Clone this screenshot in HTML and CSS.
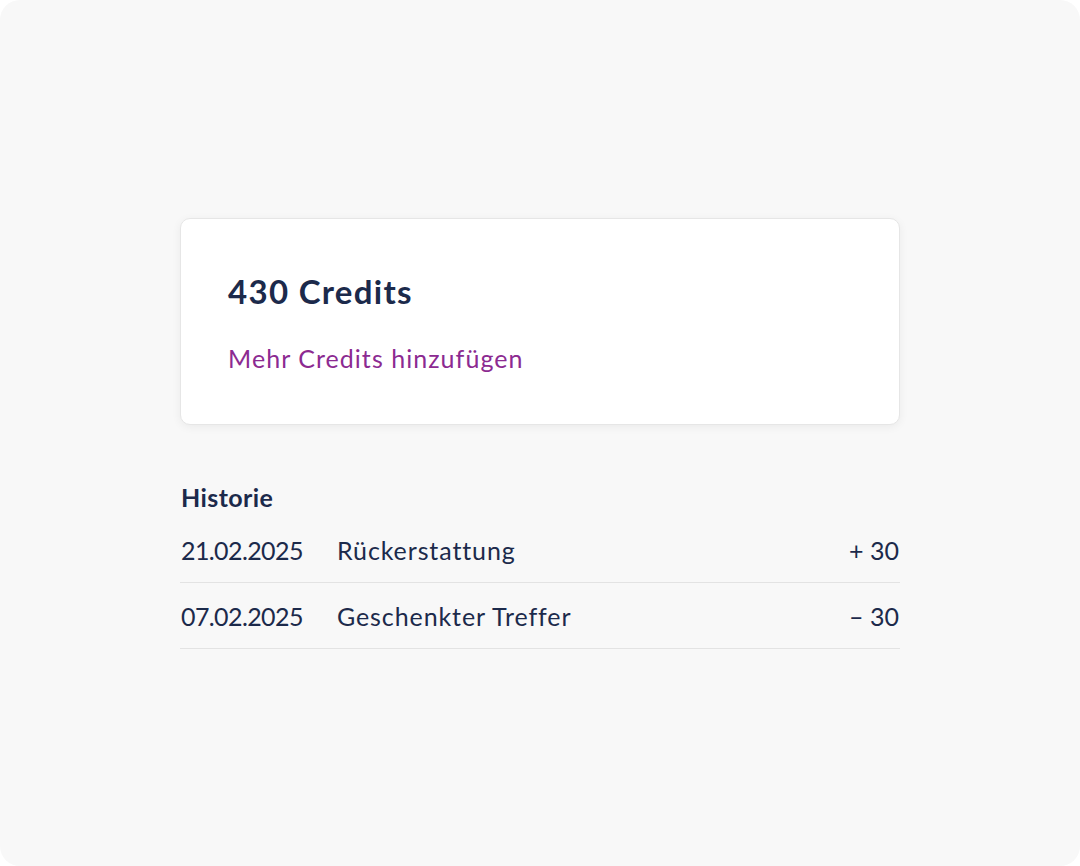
FILE: index.html
```html
<!doctype html>
<html lang="de">
  <head>
    <meta charset="utf-8">
    <title>Credits</title>
    <link rel="stylesheet" href="styles.css">
  </head>
  <body>
    <div class="frame">
      <main class="content">
        <section class="card">
          <h1 class="balance">430 Credits</h1>
          <a class="add-link" href="#">Mehr Credits hinzufügen</a>
        </section>

        <section class="history">
          <h2 class="history-title">Historie</h2>
          <ul class="history-list">
            <li class="history-row">
              <span class="date">21.02.2025</span>
              <span class="label">Rückerstattung</span>
              <span class="amount">+ 30</span>
            </li>
            <li class="history-row">
              <span class="date">07.02.2025</span>
              <span class="label">Geschenkter Treffer</span>
              <span class="amount">– 30</span>
            </li>
          </ul>
        </section>
      </main>
    </div>
  </body>
</html>
```

FILE: styles.css
```css
html {
  --ink: #1c2a4b;
  --accent: #8c2a91;
  --line: #e3e3e3;
}

body {
  margin: 0;
  background-color: #ffffff;
  font-family: Lato, "Open Sans", sans-serif;
  color: var(--ink);
  -webkit-font-smoothing: antialiased;
}

.frame {
  width: 1080px;
  height: 866px;
  border-radius: 20px;
  background-color: #f8f8f8;
  overflow: hidden;
}

.content {
  width: 720px;
  margin: 0 auto;
  padding-top: 218px;
}

.card {
  background-color: #ffffff;
  border: 1px solid #e6e6e6;
  border-radius: 10px;
  box-shadow: 0 2px 10px rgba(0, 0, 0, 0.06);
  padding: 52px 47px 0;
  height: 207px;
  box-sizing: border-box;
}

.balance {
  margin: 0;
  font-size: 33px;
  line-height: 40px;
  font-weight: 700;
  letter-spacing: 1.3px;
}

.add-link {
  display: block;
  width: fit-content;
  margin-top: 32px;
  font-size: 25px;
  line-height: 30px;
  letter-spacing: 1.05px;
  color: var(--accent);
  text-decoration: none;
}

.history {
  padding-top: 57px;
}

.history-title {
  margin: 0 0 5px;
  font-size: 25px;
  line-height: 30px;
  font-weight: 700;
  letter-spacing: 0.4px;
  padding-left: 1px;
}

.history-list {
  list-style: none;
  margin: 0;
  padding: 0;
}

.history-row {
  display: flex;
  padding: 18px 1px 17px;
  line-height: 30px;
  border-bottom: 1px solid var(--line);
  font-size: 25px;
}

.date {
  width: 156px;
  letter-spacing: -0.6px;
}

.label {
  flex: 1;
  letter-spacing: 0.9px;
}

.amount {
  text-align: right;
}
```
